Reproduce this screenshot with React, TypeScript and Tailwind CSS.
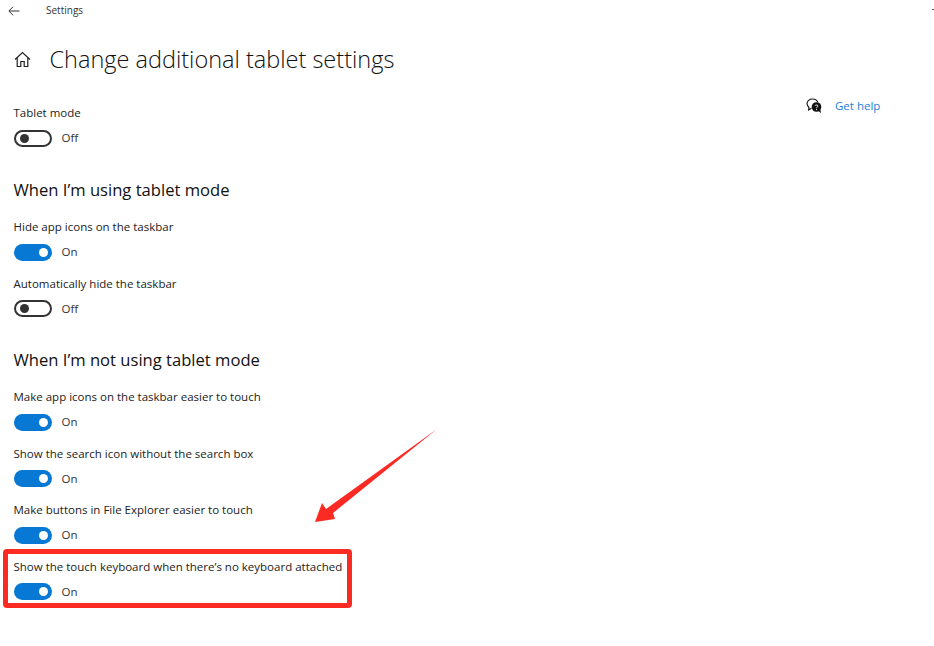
import React from 'react';

const font = { fontFamily: '"Open Sans", "Noto Sans", sans-serif' };

const Toggle: React.FC<{ label: string; on?: boolean; className?: string }> = ({ label, on, className }) => (
  <div className={className}>
    <p className="h-[18px] text-[11.5px] leading-[18px] text-[#222]">{label}</p>
    <div className="mt-[7.5px] flex h-[17px] items-center">
      {on ? (
        <div className="flex h-[17px] w-[38px] items-center justify-end rounded-full bg-[#0778d4] pr-[4px]">
          <div className="h-[9px] w-[9px] rounded-full bg-white" />
        </div>
      ) : (
        <div className="flex h-[17px] w-[38px] items-center rounded-full border-2 border-[#333] pl-[4px]">
          <div className="h-[9px] w-[9px] rounded-full bg-[#333]" />
        </div>
      )}
      <span className="ml-[10px] text-[11.5px] text-[#333]">{on ? 'On' : 'Off'}</span>
    </div>
  </div>
);

export default function App() {
  return (
    <div className="relative h-[646px] w-[934px] overflow-hidden bg-white" style={font}>
      {/* Title bar */}
      <div className="flex h-[21px] items-center pl-[8px]">
        <svg width="12" height="10" viewBox="0 0 12 10" fill="none" stroke="#333" strokeWidth="1">
          <path d="M11.5 5H1M5 .8 .9 5 5 9.2" />
        </svg>
        <span className="ml-[26px] text-[10px] text-[#333]">Settings</span>
      </div>

      {/* Header */}
      <div className="mt-[21px] flex h-[34px] items-center pl-[14px]">
        <svg width="17" height="17" viewBox="0 0 17 17" fill="none" stroke="#222" strokeWidth="1.2">
          <path d="M1 8.5 8.500 1.500 16 8.500M3.200 7v8.500h3.600v-5h3.400v5h3.600V7" />
        </svg>
        <h1 className="ml-[18.500px] text-[23.5px] font-light leading-[34px] text-[#111]">Change additional tablet settings</h1>
      </div>

      <div className="pl-[13.5px] pt-[28px]">
        <Toggle label="Tablet mode" />
        <h2 className="mt-[31.5px] h-[24px] text-[16.6px] leading-[24px] text-[#111]">When I’m using tablet mode</h2>
        <Toggle label="Hide app icons on the taskbar" on className="mt-[16px]" />
        <Toggle label="Automatically hide the taskbar" className="mt-[14px]" />
        <h2 className="mt-[31px] h-[24px] text-[16.6px] leading-[24px] text-[#111]">When I’m not using tablet mode</h2>
        <Toggle label="Make app icons on the taskbar easier to touch" on className="mt-[16px]" />
        <Toggle label="Show the search icon without the search box" on className="mt-[14px]" />
        <Toggle label="Make buttons in File Explorer easier to touch" on className="mt-[14px]" />
        <Toggle label="Show the touch keyboard when there’s no keyboard attached" on className="mt-[14px]" />
      </div>

      {/* Get help */}
      <div className="absolute left-[806px] top-[96.500px] flex h-[18px] items-center">
        <svg width="16" height="16" viewBox="0 0 16 16">
          <path d="M6.500 1C3.400 1 1 3 1 5.600c0 1.500.8 2.800 2 3.600L2.600 12l2.800-1.800" fill="none" stroke="#111" strokeWidth="1.1" />
          <path d="M6.500 1c2.600 0 4.800 1.400 5.300 3.400" fill="none" stroke="#111" strokeWidth="1.1" />
          <circle cx="10.500" cy="9" r="4.800" fill="#111" />
          <path d="m12.500 13 2.500 2.200-.6-3.600z" fill="#111" />
          <path d="M9 7.700c.2-1 2.800-1 2.900.3.100 1-1.300 1-1.400 2.200" fill="none" stroke="#fff" strokeWidth="1" />
          <circle cx="10.500" cy="11.600" r=".6" fill="#fff" />
        </svg>
        <span className="ml-[13px] text-[11.5px] text-[#1a7fd6]">Get help</span>
      </div>

      {/* Small window control remnant */}
      <div className="absolute left-[932px] top-[9px] h-px w-[2px] bg-[#555]" />

      {/* Annotations */}
      <div className="absolute left-[3px] top-[549px] h-[59px] w-[349px] rounded-[4px] border-[5px] border-[#fb2a23]" />
      <svg className="absolute left-[310px] top-[425px]" width="130" height="100" viewBox="0 0 130 100">
        <path d="M127 4 23 88 25 94 5 97 12 78 16 84Z" fill="#fb2a23" />
      </svg>
    </div>
  );
}
